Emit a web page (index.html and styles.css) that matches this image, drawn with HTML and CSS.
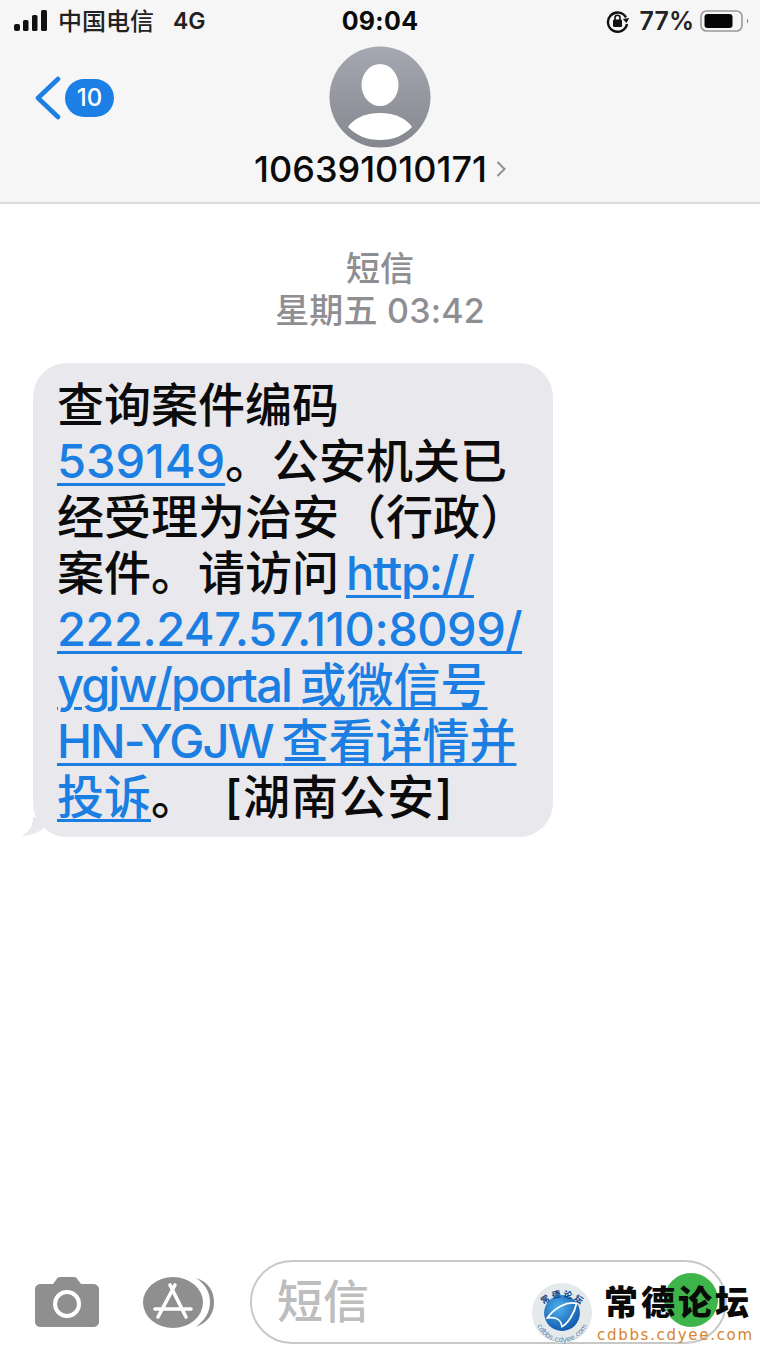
FILE: index.html
```html
<!DOCTYPE html>
<html lang="zh-CN">
<head>
<meta charset="utf-8">
<title>短信</title>
<link rel="stylesheet" href="styles.css">
</head>
<body>
<div class="screen">
  <header class="top">
    <div class="status">
      <div class="status-left">
        <svg class="signal" viewBox="0 0 34 22" width="34" height="22"><rect x="0" y="14" width="6" height="7" rx="2"/><rect x="9" y="10" width="5.5" height="11" rx="1.5"/><rect x="18" y="5" width="5.5" height="16" rx="1.5"/><rect x="27" y="0" width="6" height="21" rx="1.5"/></svg>
        <span class="carrier">中国电信</span>
        <span class="net">4G</span>
      </div>
      <div class="clock">09:04</div>
      <div class="status-right">
        <svg class="lock" viewBox="0 0 24 24" width="24" height="24"><path d="M20 8.5A9.6 9.6 0 1 0 21 15" fill="none" stroke="#111" stroke-width="2.4"/><path d="M17 9.5h6.5L20 14z" fill="#111" transform="rotate(-8 20 11)"/><rect x="7" y="10.5" width="9" height="7.5" rx="1.3" fill="#111"/><path d="M9 11V8.8a2.5 2.5 0 0 1 5 0V11" fill="none" stroke="#111" stroke-width="1.6"/></svg>
        <span class="pct">77%</span>
        <svg class="battery" viewBox="0 0 50 24" width="50" height="24"><rect x="1" y="2" width="41" height="20" rx="5.5" fill="none" stroke="#999" stroke-width="1.6"/><rect x="4.5" y="5" width="28" height="14" rx="3" fill="#050505"/><path d="M47 9.5c1.6 .7 1.6 4.3 0 5z" fill="#888"/></svg>
      </div>
    </div>
    <div class="nav">
      <div class="back">
        <svg class="chev" viewBox="0 0 28 44" width="28" height="44"><path d="M25 3 5 22l20 19" fill="none" stroke="#1b7fe6" stroke-width="4.6" stroke-linecap="round" stroke-linejoin="round"/></svg>
        <span class="count">10</span>
      </div>
      <div class="contact">
        <svg class="avatar" viewBox="0 0 102 102" width="102" height="102">
          <defs><linearGradient id="avg" x1="0" y1="0" x2="0" y2="1"><stop offset="0" stop-color="#a5a8b0"/><stop offset="1" stop-color="#85878f"/></linearGradient><clipPath id="avc"><circle cx="51" cy="51" r="50.5"/></clipPath></defs>
          <circle cx="51" cy="51" r="50.5" fill="url(#avg)"/>
          <ellipse cx="51" cy="39" rx="18.5" ry="21" fill="#fff"/>
          <path d="M19 81C24 73 36 67 51 67s27 6 32 14C74 90 64 94 51 94S28 90 19 81z" fill="#fff" clip-path="url(#avc)"/>
        </svg>
        <div class="name-row"><span class="name">106391010171</span><svg class="more" viewBox="0 0 10 20" width="10" height="20"><path d="M1.5 3 8.5 10l-7 7" fill="none" stroke="#8e8e93" stroke-width="2"/></svg></div>
      </div>
    </div>
  </header>

  <main class="thread">
    <div class="stamp">
      <div class="stamp-kind">短信</div>
      <div class="stamp-time">星期五 03:42</div>
    </div>
    <div class="bubble">
      <svg class="tail" viewBox="0 0 26 20" width="26" height="20"><path d="M11 0C11 8 8 14 0 19 7 19 15 16 21 12L26 0z" fill="#e8e8ed"/></svg>
      <p class="msg">查询案件编码<br><a class="lk">539149</a>。公安机关已<br>经受理为治安（行政）<br>案件。请访问<a class="lk alpha gap">http://</a><br><a class="lk num">222.247.57.110:8099/</a><br><a class="lk"><span class="lat">ygjw/portal </span>或微信号</a><br><a class="lk"><span class="lat">HN-YGJW </span>查看详情并</a><br><a class="lk">投诉</a>。 <span class="src">[湖南公安]</span></p>
    </div>
  </main>

  <footer class="composer">
    <svg class="cam" viewBox="0 0 64 50" width="64" height="50"><path d="M6 7h12l3-4c1-2 2-3 4-3h14c2 0 3 1 4 3l3 4h12c3 0 6 2 6 5v33c0 3-3 5-6 5H6c-3 0-6-2-6-5V12c0-3 3-5 6-5z" fill="#8f8f8f"/><circle cx="32" cy="27" r="12" fill="none" stroke="#fff" stroke-width="4"/></svg>
    <svg class="apps" viewBox="0 0 72 54" width="72" height="54"><path d="M53 2C66 6 71 16 71 26 71 38 65 46 53 51 62 44 67 36 67 26 67 16 62 8 53 2z" fill="#8f8f8f"/><ellipse cx="30" cy="26.500" rx="30" ry="25.500" fill="#8f8f8f"/><path d="M32 9 15 41M27 9l16 32M12 33h36" fill="none" stroke="#fff" stroke-width="3.6" stroke-linecap="round"/></svg>
    <div class="field"><span class="placeholder">短信</span></div>
  </footer>

  <aside class="mark">
    <svg class="mark-logo" viewBox="0 0 64 64" width="62" height="62">
      <defs>
        <radialGradient id="gl" cx=".4" cy=".35" r=".75"><stop offset="0" stop-color="#4fb0ea"/><stop offset="1" stop-color="#0a4fa8"/></radialGradient>
        <path id="arcT" d="M5 38A27.5 27.5 0 0 1 59 38"/>
        <path id="arcB" d="M4 34A28 28 0 0 0 60 34"/>
      </defs>
      <circle cx="32" cy="32" r="31" fill="#e4e9ec"/>
      <circle cx="32" cy="32" r="18.5" fill="url(#gl)"/>
      <path d="M17 37C24 27 36 20 47 22 45 32 38 43 32 46 31 39 27 36 17 37z" fill="none" stroke="#fff" stroke-width="1.8"/>
      <text class="arc-top"><textPath href="#arcT" startOffset="50%" text-anchor="middle">常 德 论 坛</textPath></text>
      <text class="arc-bot"><textPath href="#arcB" startOffset="50%" text-anchor="middle">cdbbs.cdyee.com</textPath></text>
    </svg>
    <div class="mark-text">
      <div class="mark-title"><span class="mark-dot"></span><span class="mark-chars">常德论坛</span></div>
      <div class="mark-url">cdbbs.cdyee.com</div>
    </div>
  </aside>
</div>
</body>
</html>
```

FILE: styles.css
```css
* { box-sizing: border-box; }
html, body { margin: 0; padding: 0; }
body {
  background: #fff;
  font-family: Inter, "Noto Sans CJK SC", sans-serif;
  color: #0b0b0b;
}
.screen {
  position: relative;
  width: 760px;
  height: 1352px;
  overflow: hidden;
  display: flex;
  flex-direction: column;
}

/* header */
.top {
  height: 204px;
  background: #f6f6f6;
  border-bottom: 2px solid #dcdcdc;
  flex: none;
}
.status {
  display: grid;
  grid-template-columns: 1fr auto 1fr;
  align-items: center;
  height: 42px;
  padding: 0 14px;
}
.status-left, .status-right { display: flex; align-items: center; }
.status-right { justify-content: flex-end; }
.signal { fill: #111; margin-right: 10px; }
.carrier { font-size: 24px; font-weight: 500; color: #222; width: 96px; white-space: nowrap; margin-bottom: 4px; }
.net { font-size: 23px; font-weight: 600; color: #222; margin-left: 19px; }
.clock { font-size: 25px; font-weight: 700; letter-spacing: .3px; color: #0b0b0b; }
.lock { margin-right: 10px; }
.pct { font-size: 25px; font-weight: 600; color: #222; margin-right: 6px; }
.battery { margin-right: -4px; }

.nav {
  display: grid;
  grid-template-columns: 1fr auto 1fr;
  align-items: start;
  padding-top: 4px;
}
.back {
  display: flex;
  align-items: center;
  padding: 30px 0 0 33px;
}
.chev { flex: none; }
.count {
  width: 49px;
  height: 38px;
  margin-left: 4px;
  border-radius: 19px;
  background: #1b7fe6;
  color: #fff;
  font-size: 24px;
  font-weight: 500;
  text-align: center;
  line-height: 38px;
}
.contact {
  display: flex;
  flex-direction: column;
  align-items: center;
}
.avatar { display: block; }
.name-row {
  display: flex;
  align-items: center;
  height: 44px;
  margin-top: -1px;
}
.name { font-size: 36px; font-weight: 500; letter-spacing: 0; line-height: 40px; color: #0b0b0b; }
.more { margin-left: 9px; }

/* thread */
.thread { flex: 1; }
.stamp {
  text-align: center;
  color: #8e8e93;
  padding-top: 44px;
}
.stamp-kind { font-size: 34px; line-height: 42px; font-weight: 500; }
.stamp-time { font-size: 34px; line-height: 41px; font-weight: 500; letter-spacing: .2px; }
.bubble {
  position: relative;
  width: 520px;
  height: 474px;
  margin: 32px 0 0 33px;
  padding: 14px 0 0 24px;
  background: #e8e8ed;
  border-radius: 34px;
}
.tail { position: absolute; left: -11px; bottom: 0; }
.msg {
  position: relative;
  margin: 0;
  font-size: 47px;
  font-weight: 500;
  line-height: 56px;
  white-space: nowrap;
  color: #0b0b0b;
}
.lk {
  color: #1a7ee2;
  text-decoration: underline;
  text-decoration-thickness: 3px;
  text-underline-offset: 5px;
}
.num { letter-spacing: -.5px; }
.alpha { letter-spacing: -1.3px; }
.gap { margin-left: 7px; }
.lat { letter-spacing: -1.9px; word-spacing: -2px; }
.src { margin-left: 14px; letter-spacing: 1.1px; }

/* composer */
.composer {
  flex: none;
  display: flex;
  align-items: flex-start;
  height: 92px;
  padding: 17px 33px 0 35px;
  position: relative;
}
.cam { flex: none; }
.apps { margin: -1px 0 0 44px; flex: none; }
.field {
  flex: 1;
  height: 84px;
  margin: -17px 0 0 35px;
  border: 2px solid #c8c8c8;
  border-radius: 42px;
  padding: 0 0 8px 25px;
  display: flex;
  align-items: center;
}
.placeholder { font-size: 46px; color: #bdbdbd; font-weight: 500; }

/* watermark */
.mark {
  position: absolute;
  left: 531px;
  top: 1278px;
  display: flex;
  align-items: flex-start;
}
.mark-logo { margin-top: 4px; flex: none; }
.arc-top { font-size: 9px; font-weight: 700; fill: #0a3f86; font-family: "Noto Sans CJK SC", sans-serif; }
.arc-bot { font-size: 7.5px; fill: #5d86b0; font-family: "DejaVu Sans", sans-serif; }
.mark-text { margin-left: 4px; position: relative; }
.mark-title {
  position: relative;
  height: 48px;
  width: 156px;
}
.mark-dot {
  position: absolute;
  left: 67px;
  top: -5px;
  width: 54px;
  height: 54px;
  border-radius: 50%;
  background: #3db54a;
}
.mark-chars {
  position: relative;
  display: block;
  font-family: "Noto Sans CJK SC", sans-serif;
  font-weight: 900;
  font-size: 34px;
  line-height: 46px;
  letter-spacing: 3px;
  color: #0a0a0a;
  white-space: nowrap;
  margin-left: 7px;
}
.mark-url {
  font-family: "DejaVu Sans", sans-serif;
  font-size: 15px;
  line-height: 18px;
  letter-spacing: 1.7px;
  color: #d9832b;
  white-space: nowrap;
}
```
